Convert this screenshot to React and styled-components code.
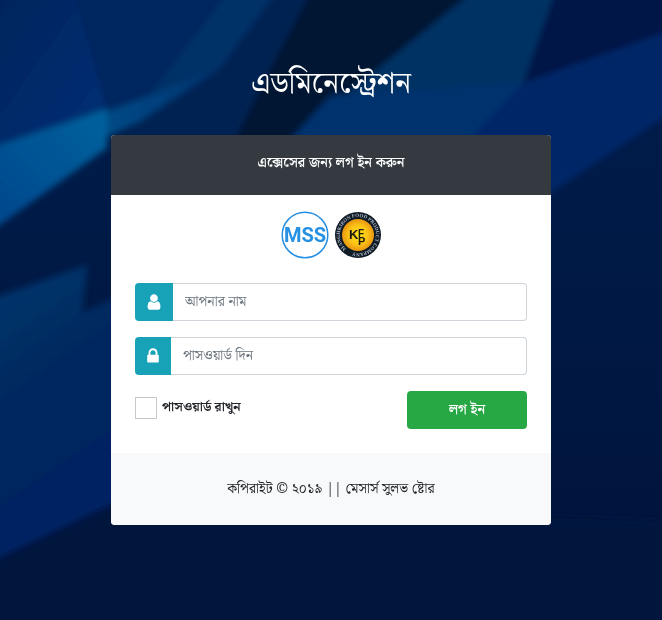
import React, { useState } from 'react';
import styled, { createGlobalStyle } from 'styled-components';

const GlobalStyle = createGlobalStyle`
  * {
    box-sizing: border-box;
  }
  body {
    margin: 0;
    background: #00143a;
    color: #212529;
    font-family: "Noto Serif Bengali", "Noto Sans Bengali", "Open Sans", sans-serif;
    font-size: 14px;
    line-height: 24px;
  }
`;

function Backdrop() {
  return (
    <BackdropSvg viewBox="0 0 662 620" preserveAspectRatio="xMidYMid slice" aria-hidden="true">
      <defs>
        <filter id="soft" x="-10%" y="-10%" width="120%" height="120%">
          <feGaussianBlur stdDeviation="3" />
        </filter>
        <linearGradient id="beam" x1="0" y1="1" x2="1" y2="0">
          <stop offset="0" stopColor="#00458c" />
          <stop offset="1" stopColor="#00629c" />
        </linearGradient>
        <linearGradient id="beamEnd" x1="0" y1="0" x2="1" y2="0">
          <stop offset="0" stopColor="#004a86" />
          <stop offset="1" stopColor="#003370" />
        </linearGradient>
        <linearGradient id="leftTop" x1="0" y1="0" x2="1" y2="1">
          <stop offset="0" stopColor="#00235a" />
          <stop offset="1" stopColor="#003078" />
        </linearGradient>
        <linearGradient id="leftLow" x1="0" y1="0" x2="0.3" y2="1">
          <stop offset="0" stopColor="#003470" />
          <stop offset="0.25" stopColor="#003066" />
          <stop offset="0.45" stopColor="#00285e" />
          <stop offset="1" stopColor="#002264" />
        </linearGradient>
        <linearGradient id="base" x1="0" y1="0" x2="0" y2="1">
          <stop offset="0" stopColor="#001d4c" />
          <stop offset="0.4" stopColor="#001a46" />
          <stop offset="1" stopColor="#00133a" />
        </linearGradient>
      </defs>
      <rect width="662" height="620" fill="url(#base)" />
      <g filter="url(#soft)">
        <path d="M-10-10H74L108 112-10 155Z" fill="url(#leftTop)" />
        <path d="M74-10H252L220 68 107 112Z" fill="#00265e" />
        <path d="M285-10L220 68 150 95 230-10Z" fill="#003068" />
        <path d="M315-10L280 80 235 140H120L220 68 278-10Z" fill="#002052" />
        <path d="M-10 148L107 109V148L-10 232Z" fill="url(#beam)" />
        <path d="M107 112L220 68 140 122 107 137Z" fill="url(#beamEnd)" />
        <path d="M312-10H480L380 75 290 145H232L275 60Z" fill="#001230" />
        <path d="M475-10H556L523 85 480 145H290L345 95Z" fill="#003064" />
        <path d="M331 95L523 83 470 145H285Z" fill="#00336e" />
        <path d="M556-10H672V32L523 84Z" fill="#001447" />
        <path d="M523 83L672 30V112L540 200 460 150Z" fill="#002868" />
        <path d="M-10 299L87 265 82 313 120 296V500L-10 562Z" fill="url(#leftLow)" />
        <path d="M-10 562L120 500 672 520V640H-10Z" fill="#00153c" />
      </g>
    </BackdropSvg>
  );
}

function UserIcon() {
  return (
    <svg width="14" height="18" viewBox="256 0 1280 1792" fill="currentColor" aria-hidden="true">
      <path d="M1536 1399q0 109-62.500 187t-150.500 78h-854q-88 0-150.500-78t-62.500-187q0-85 8.500-160.500t31.500-152 58.500-131 94-89 134.500-34.500q131 128 313 128t313-128q76 0 134.500 34.500t94 89 58.500 131 31.500 152 8.500 160.500zm-256-887q0 159-112.500 271.500t-271.500 112.500-271.500-112.500-112.500-271.500 112.500-271.500 271.500-112.500 271.500 112.500 112.500 271.500z" />
    </svg>
  );
}

function LockIcon() {
  return (
    <svg width="12" height="18" viewBox="320 0 1152 1792" fill="currentColor" aria-hidden="true">
      <path d="M640 768h512v-192q0-106-75-181t-181-75-181 75-75 181v192zm832 96v576q0 40-28 68t-68 28h-960q-40 0-68-28t-28-68v-576q0-40 28-68t68-28h32v-192q0-184 132-316t316-132 316 132 132 316v192h32q40 0 68 28t28 68z" />
    </svg>
  );
}

function MssLogo() {
  return (
    <LogoSvg viewBox="0 0 48 48" role="img" aria-label="MSS">
      <circle cx="24" cy="24" r="22.8" fill="#fff" stroke="#2690e3" strokeWidth="1.5" />
      <text x="24" y="31" textAnchor="middle" fontFamily="Roboto, Liberation Sans, sans-serif" fontWeight="700" fontSize="20" fill="#2690e3">MSS</text>
    </LogoSvg>
  );
}

function KfpLogo() {
  return (
    <LogoSvg viewBox="0 0 48 48" role="img" aria-label="KFP">
      <defs>
        <radialGradient id="gold">
          <stop offset="0" stopColor="#ffe21c" />
          <stop offset="0.6" stopColor="#fcc317" />
          <stop offset="1" stopColor="#e8950f" />
        </radialGradient>
        <path id="ring" d="M12.400 37.800A18 18 0 0 1 35.600 10.200A18 18 0 0 1 12.400 37.800" />
      </defs>
      <circle cx="24" cy="24" r="23" fill="#111b26" />
      <circle cx="24" cy="24" r="16" fill="url(#gold)" />
      <text fontFamily="Liberation Serif, serif" fontWeight="700" fontSize="5" fill="#aebccb">
        <textPath href="#ring">MANGHKIRON FOOD PRODUCT COMPANY</textPath>
      </text>
      <text x="15" y="28" fontFamily="Liberation Sans, sans-serif" fontWeight="700" fontSize="13" fill="#1c1a0c">
        K<tspan x="24" y="26" fontSize="10">F</tspan><tspan x="24" y="34" fontSize="11">P</tspan>
      </text>
    </LogoSvg>
  );
}

function App() {
  const [formValues, setFormValues] = useState({ name: '', password: '', remember: false });

  const handleChange = (e) => {
    const { name, type, value, checked } = e.target;
    setFormValues({ ...formValues, [name]: type === 'checkbox' ? checked : value });
  };

  return (
    <>
      <GlobalStyle />
      <Backdrop />
      <Page>
        <Title>এডমিনেস্ট্রেশন</Title>
        <Card>
          <CardHeader>এক্সেসের জন্য লগ ইন করুন</CardHeader>
          <CardBody onSubmit={(e) => e.preventDefault()}>
            <Logos>
              <MssLogo />
              <KfpLogo />
            </Logos>
            <InputGroup>
              <Addon htmlFor="name" aria-label="আপনার নাম"><UserIcon /></Addon>
              <Input id="name" name="name" type="text" placeholder="আপনার নাম" value={formValues.name} onChange={handleChange} />
            </InputGroup>
            <InputGroup>
              <Addon htmlFor="password" aria-label="পাসওয়ার্ড দিন"><LockIcon /></Addon>
              <Input id="password" name="password" type="password" placeholder="পাসওয়ার্ড দিন" value={formValues.password} onChange={handleChange} />
            </InputGroup>
            <Actions>
              <Remember htmlFor="remember">
                <Checkbox id="remember" name="remember" type="checkbox" checked={formValues.remember} onChange={handleChange} />
                পাসওয়ার্ড রাখুন
              </Remember>
              <LoginButton type="submit">লগ ইন</LoginButton>
            </Actions>
          </CardBody>
          <CardFooter>কপিরাইট © ২০১৯ || মেসার্স সুলভ ষ্টোর</CardFooter>
        </Card>
      </Page>
    </>
  );
}

const BackdropSvg = styled.svg`
  position: fixed;
  inset: 0;
  z-index: -1;
  width: 100%;
  height: 100%;
`;

const Page = styled.main`
  display: flex;
  flex-direction: column;
  align-items: center;
  padding: 60px 16px;
`;

const Title = styled.h1`
  margin: 0 0 27px;
  color: #fff;
  font-size: 30px;
  font-weight: 400;
  line-height: 48px;
`;

const Card = styled.section`
  width: 100%;
  max-width: 440px;
  border-radius: 4px;
  overflow: hidden;
  background: #fff;
`;

const CardHeader = styled.header`
  padding: 16px 24px 20px;
  background: #343a40;
  color: #fff;
  font-weight: 600;
  text-align: center;
`;

const CardBody = styled.form`
  display: flex;
  flex-direction: column;
  gap: 16px;
  padding: 16px 24px 24px;
`;

const Logos = styled.div`
  display: flex;
  justify-content: center;
  gap: 5px;
  margin-bottom: 8px;
`;

const LogoSvg = styled.svg`
  width: 48px;
  height: 48px;
`;

const InputGroup = styled.div`
  display: flex;
  height: 38px;
`;

const Addon = styled.label`
  display: flex;
  align-items: center;
  padding: 0 12px;
  border-radius: 4px 0 0 4px;
  background: #17a2b8;
  color: #fff;
`;

const Input = styled.input`
  flex: 1;
  min-width: 0;
  padding: 0 12px;
  border: 1px solid #ced4da;
  border-left: 0;
  border-radius: 0 4px 4px 0;
  background: #fff;
  color: #495057;
  font: inherit;

  &::placeholder {
    color: #6c757d;
    opacity: 1;
  }
  &:focus {
    outline: none;
    border-color: #80bdff;
  }
`;

const Actions = styled.div`
  display: flex;
  align-items: flex-start;
  justify-content: space-between;
`;

const Remember = styled.label`
  display: flex;
  align-items: center;
  gap: 5px;
  height: 34px;
  font-size: 13px;
  font-weight: 700;
  cursor: pointer;
`;

const Checkbox = styled.input`
  appearance: none;
  width: 22px;
  height: 22px;
  margin: 0;
  border: 1px solid #c8c8c8;
  background: #fff;
  cursor: pointer;

  &:checked {
    background: #17a2b8;
  }
`;

const LoginButton = styled.button`
  width: 120px;
  height: 38px;
  border: 0;
  border-radius: 4px;
  background: #28a745;
  color: #fff;
  font: inherit;
  font-weight: 600;
  cursor: pointer;
`;

const CardFooter = styled.footer`
  padding: 24px;
  background: #f8f9fa;
  text-align: center;
`;

export default App;
